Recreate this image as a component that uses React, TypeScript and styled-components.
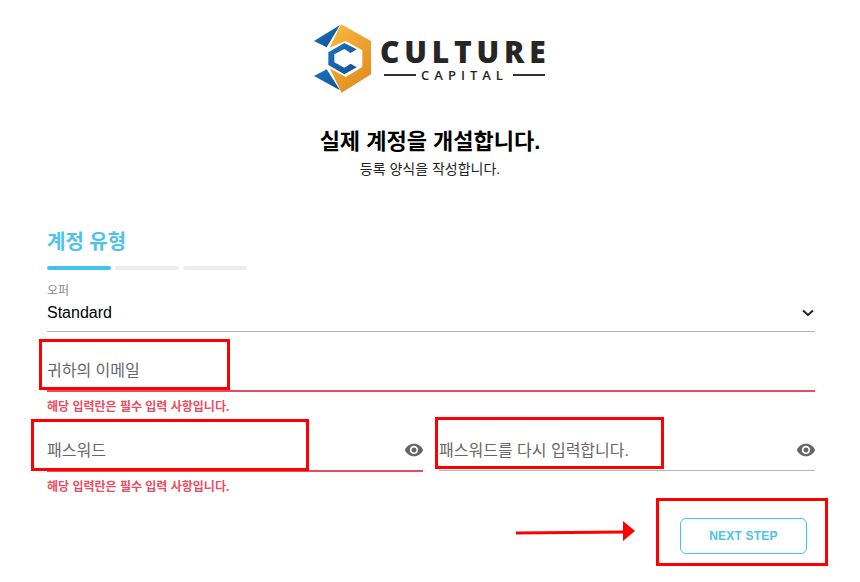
import styled, { createGlobalStyle } from "styled-components";
import { MdRemoveRedEye } from "react-icons/md";

const KO = `"Liberation Sans", "Noto Sans CJK KR", sans-serif`;

const GlobalStyle = createGlobalStyle`
  html, body {
    margin: 0;
    padding: 0;
    background: #fff;
    font-family: ${KO};
  }
`;

const LogoMark = () => (
  <svg width="80" height="85" viewBox="0 0 240 255">
    <defs>
      <linearGradient id="orange" x1="0.2" y1="0" x2="0.8" y2="1">
        <stop offset="0" stopColor="#f6b73c" />
        <stop offset="1" stopColor="#e08a1e" />
      </linearGradient>
      <linearGradient id="blue" x1="0" y1="0" x2="1" y2="1">
        <stop offset="0" stopColor="#1c76c0" />
        <stop offset="1" stopColor="#0f4f95" />
      </linearGradient>
    </defs>
    <path
      d="M108 28 L198 78 L198 178 L110 233 L74 160 L122 186 L172 156 L172 106 L122 78 L74 98 Z"
      fill="url(#orange)"
    />
    <path d="M105 30 L27 78 L65 97 Z" fill="url(#blue)" />
    <path d="M27 183 L65 163 L105 226 Z" fill="url(#blue)" />
    <path
      d="M118 84 L70 112 L70 150 L118 178 L155 157 L137 146 L118 158 L88 142 L88 118 L118 102 L137 114 L155 103 Z"
      fill="url(#blue)"
    />
  </svg>
);

export default function App() {
  return (
    <Page>
      <GlobalStyle />
      <LogoRow>
        <LogoMarkSlot>
          <LogoMark />
        </LogoMarkSlot>
        <LogoText>
          <LogoName>CULTURE</LogoName>
          <LogoSub>
            <LogoLine />
            <LogoSubText>CAPITAL</LogoSubText>
            <LogoLine />
          </LogoSub>
        </LogoText>
      </LogoRow>

      <Title>실제 계정을 개설합니다.</Title>
      <Subtitle>등록 양식을 작성합니다.</Subtitle>

      <Form>
        <StepTitle>계정 유형</StepTitle>
        <Steps>
          <Step $active />
          <Step />
          <Step />
        </Steps>

        <SelectField>
          <SelectLabel>오퍼</SelectLabel>
          <SelectValue>
            Standard
            <svg width="12" height="8" viewBox="0 0 12 8" fill="none">
              <path d="M1 1.5 L6 6 L11 1.5" stroke="#222" strokeWidth="2" />
            </svg>
          </SelectValue>
        </SelectField>

        <Field $error>
          <Placeholder>귀하의 이메일</Placeholder>
        </Field>
        <ErrorText>해당 입력란은 필수 입력 사항입니다.</ErrorText>

        <PasswordRow>
          <PasswordColumn>
            <PasswordField $error>
              <Placeholder>패스워드</Placeholder>
              <EyeIcon size={20} />
            </PasswordField>
            <ErrorText>해당 입력란은 필수 입력 사항입니다.</ErrorText>
          </PasswordColumn>
          <PasswordColumn>
            <PasswordField>
              <Placeholder>패스워드를 다시 입력합니다.</Placeholder>
              <EyeIcon size={20} />
            </PasswordField>
          </PasswordColumn>
        </PasswordRow>

        <Actions>
          <NextButton>NEXT STEP</NextButton>
        </Actions>
      </Form>

      <EmailMark />
      <PasswordMark />
      <ConfirmMark />
      <ButtonMark />
      <Arrow width="122" height="24" viewBox="0 0 122 24">
        <path d="M0 13 L108 12" stroke="#f00" strokeWidth="3" />
        <path d="M107 1 L119 11 L107 21 Z" fill="#f00" />
      </Arrow>
    </Page>
  );
}

const Page = styled.div`
  position: relative;
  width: 860px;
  height: 582px;
  overflow: hidden;
  background: #fff;
  padding-top: 24px;
  box-sizing: border-box;
`;

const LogoRow = styled.div`
  display: flex;
  height: 70px;
  padding-left: 305px;
`;

const LogoMarkSlot = styled.div`
  width: 75px;
  height: 70px;
  margin-top: -9px;
`;

const LogoText = styled.div`
  display: flex;
  flex-direction: column;
  width: 170px;
  padding-top: 13px;
`;

const LogoName = styled.div`
  font-family: "Open Sans", sans-serif;
  font-weight: 800;
  font-size: 30px;
  line-height: 30px;
  letter-spacing: 4.8px;
  color: #262626;
  white-space: nowrap;
`;

const LogoSub = styled.div`
  display: flex;
  align-items: center;
  gap: 5px;
  margin-top: 1px;
  padding-left: 4px;
  width: 161px;
`;

const LogoLine = styled.div`
  flex: 1;
  height: 2px;
  background: #333;
`;

const LogoSubText = styled.div`
  font-family: "Open Sans", sans-serif;
  font-size: 13px;
  line-height: 14px;
  letter-spacing: 5px;
  font-weight: 600;
  color: #262626;
`;

const Title = styled.h1`
  margin: 32px 0 0;
  font-size: 22px;
  line-height: 32px;
  font-weight: 700;
  color: #000;
  text-align: center;
`;

const Subtitle = styled.p`
  margin: 1px 0 0;
  font-size: 14px;
  line-height: 20px;
  color: #222;
  text-align: center;
`;

const Form = styled.div`
  display: flex;
  flex-direction: column;
  margin-top: 47px;
  padding: 0 45px 0 47px;
`;

const StepTitle = styled.h2`
  margin: 0;
  font-size: 20px;
  line-height: 32px;
  font-weight: 700;
  color: #4cc3ea;
`;

const Steps = styled.div`
  display: flex;
  gap: 4px;
  margin-top: 8px;
`;

const Step = styled.div<{ $active?: boolean }>`
  width: 64px;
  height: 4px;
  border-radius: 2px;
  background: ${({ $active }) => ($active ? "#41c3ee" : "#ececec")};
`;

const SelectField = styled.div`
  display: flex;
  flex-direction: column;
  margin-top: 14px;
  height: 47px;
  border-bottom: 1px solid #b5b5b5;
`;

const SelectLabel = styled.div`
  font-size: 12px;
  line-height: 14px;
  color: #888;
`;

const SelectValue = styled.div`
  display: flex;
  align-items: center;
  justify-content: space-between;
  margin-top: 3px;
  padding-right: 1px;
  font-size: 16px;
  line-height: 24px;
  color: #000;
`;

const Field = styled.div<{ $error?: boolean }>`
  display: flex;
  align-items: center;
  height: 38px;
  padding-bottom: 2px;
  margin-top: 18px;
  box-sizing: content-box;
  border-bottom: ${({ $error }) =>
    $error ? "2px solid #e94b61" : "1px solid #b5b5b5"};
`;

const PasswordField = styled(Field)`
  justify-content: space-between;
  margin-top: 0;
`;

const Placeholder = styled.span`
  font-size: 16px;
  color: #666;
  white-space: nowrap;
`;

const EyeIcon = styled(MdRemoveRedEye)`
  margin: 2px -1px 0 0;
  color: #666;
`;

const ErrorText = styled.div`
  margin-top: 8px;
  font-size: 12px;
  line-height: 14px;
  font-weight: 700;
  color: #e94b61;
`;

const PasswordRow = styled.div`
  display: flex;
  gap: 16px;
  margin-top: 16px;
`;

const PasswordColumn = styled.div`
  flex: 1;
  min-width: 0;
`;

const Actions = styled.div`
  display: flex;
  justify-content: flex-end;
  margin-top: 24px;
  padding-right: 8px;
`;

const NextButton = styled.button`
  width: 127px;
  height: 36px;
  padding: 0;
  background: #fff;
  border: 1px solid #41c3ee;
  border-radius: 6px;
  font-family: "Liberation Sans", sans-serif;
  font-size: 12px;
  font-weight: 700;
  letter-spacing: 0.2px;
  color: #4cc3ea;
`;

const RedMark = styled.div`
  position: absolute;
  box-sizing: border-box;
  border: 3px solid #f00;
`;

const EmailMark = styled(RedMark)`
  left: 39px;
  top: 339px;
  width: 191px;
  height: 51px;
`;

const PasswordMark = styled(RedMark)`
  left: 31px;
  top: 419px;
  width: 278px;
  height: 52px;
`;

const ConfirmMark = styled(RedMark)`
  left: 435px;
  top: 417px;
  width: 229px;
  height: 52px;
`;

const ButtonMark = styled(RedMark)`
  left: 656px;
  top: 498px;
  width: 172px;
  height: 68px;
`;

const Arrow = styled.svg`
  position: absolute;
  left: 516px;
  top: 520px;
`;
